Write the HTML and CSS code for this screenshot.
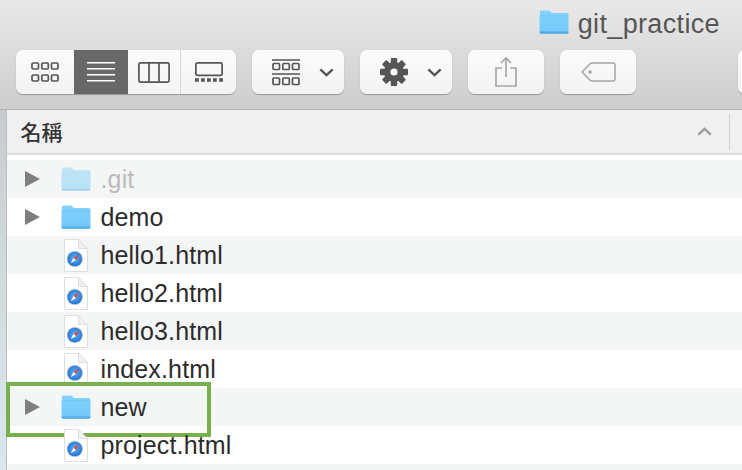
FILE: index.html
```html
<!DOCTYPE html>
<html lang="zh-Hant">
<head>
<meta charset="utf-8">
<title>git_practice</title>
<link rel="stylesheet" href="styles.css">
</head>
<body>
<svg class="defs" width="0" height="0" aria-hidden="true">
  <defs>
    <linearGradient id="fold" x1="0" y1="0" x2="0" y2="1">
      <stop offset="0" stop-color="#84d3fc"/>
      <stop offset="1" stop-color="#70c8fa"/>
    </linearGradient>
    <radialGradient id="dial" cx="0.5" cy="0.45" r="0.6">
      <stop offset="0" stop-color="#5db4f2"/>
      <stop offset="1" stop-color="#1e6ed2"/>
    </radialGradient>
    <symbol id="folder" viewBox="0 0 30 24">
      <path d="M1 5V2C1 1 1.600 .5 2.500 .5h7c.8 0 1.200.3 1.800.9L13 3h14.800C29 3 29.500 3.800 29.500 5v17c0 1-.7 1.700-1.700 1.700H2.200C1.200 23.700.5 23 .5 22V6c0-.4.1-.8.5-1z" fill="url(#fold)"/>
      <path d="M1 5.500h28.500v.7H.5c0-.3.1-.5.5-.7z" fill="#5ab8f2" opacity=".55"/>
      <path d="M.5 22c0 1 .7 1.700 1.700 1.700h25.600c1 0 1.700-.7 1.700-1.700v-.4H.5z" fill="#4aa6e4" opacity=".8"/>
    </symbol>
    <symbol id="page" viewBox="0 0 24 33">
      <path d="M.5 .5H14.500L23.500 9.500V32.500H.5z" fill="#fff" stroke="#dedede"/>
      <path d="M14.500 .5V9.500H23.500z" fill="#f0f0f0" stroke="#dedede"/>
      <circle cx="10.800" cy="20" r="8" fill="#b5c1cc"/>
      <circle cx="10.800" cy="20" r="7.300" fill="url(#dial)"/>
      <path d="M15 15.800L12 21.200 9.600 18.800z" fill="#ef3f3a"/>
      <path d="M6.600 24.200L9.600 18.800 12 21.200z" fill="#f4f6f8"/>
    </symbol>
    <symbol id="tri" viewBox="0 0 15 16">
      <path d="M0 0L15 8 0 16z" fill="#7f7f7f"/>
    </symbol>
    <symbol id="chev" viewBox="0 0 15 9">
      <path d="M1.300 1.300L7.500 7.200 13.700 1.300" fill="none" stroke="currentColor" stroke-width="2.300"/>
    </symbol>
  </defs>
</svg>
<div class="page">
  <header class="toolbar">
    <div class="titlebar">
      <svg class="title-icon" width="30" height="24"><use href="#folder"/></svg>
      <span class="title-text">git_practice</span>
    </div>
    <div class="tools">
      <div class="btn segmented">
        <span class="seg seg-a">
          <svg width="28" height="20" viewBox="0 0 28 20" fill="none" stroke="#555" stroke-width="1.700">
            <rect x="1" y="1" width="6.500" height="6" rx="1.200"/><rect x="10.800" y="1" width="6.500" height="6" rx="1.200"/><rect x="20.500" y="1" width="6.500" height="6" rx="1.200"/>
            <rect x="1" y="13" width="6.500" height="6" rx="1.200"/><rect x="10.800" y="13" width="6.500" height="6" rx="1.200"/><rect x="20.500" y="13" width="6.500" height="6" rx="1.200"/>
          </svg>
        </span>
        <span class="seg seg-b">
          <svg width="28" height="20" viewBox="0 0 28 20" stroke="#fff" stroke-width="1.400">
            <path d="M0 .7H28M0 6.700H28M0 12.700H28M0 18.700H28"/>
          </svg>
        </span>
        <span class="seg seg-c">
          <svg width="32" height="21" viewBox="0 0 32 21" fill="none" stroke="#555" stroke-width="1.700">
            <rect x=".9" y=".9" width="30.200" height="19.200" rx="1.500"/><path d="M11 1V20M21 1V20"/>
          </svg>
        </span>
        <span class="seg seg-d">
          <svg width="28" height="20" viewBox="0 0 28 20" fill="none" stroke="#555" stroke-width="1.700">
            <rect x=".9" y=".9" width="26.200" height="12.500" rx="1.500"/>
            <path d="M0 18H3.800M6 18H9.800M12 18H15.800M18 18H21.800M24.200 18H28" stroke-width="3.500"/>
          </svg>
        </span>
      </div>
      <div class="btn menu">
        <svg class="group-icon" width="28" height="27" viewBox="0 0 28 27" fill="none" stroke="#555" stroke-width="1.700">
          <path d="M0 1H28M0 15H28"/>
          <rect x="1" y="4.500" width="6.500" height="6" rx="1"/><rect x="10.800" y="4.500" width="6.500" height="6" rx="1"/><rect x="20.500" y="4.500" width="6.500" height="6" rx="1"/>
          <rect x="1" y="19" width="6.500" height="6.500" rx="1"/><rect x="10.800" y="19" width="6.500" height="6.500" rx="1"/><rect x="20.500" y="19" width="6.500" height="6.500" rx="1"/>
        </svg>
        <svg class="chev" width="15" height="9"><use href="#chev"/></svg>
      </div>
      <div class="btn menu">
        <svg width="28" height="28" viewBox="0 0 28 28">
          <g fill="#555">
            <rect x="10.800" y="0" width="6.400" height="28" rx="1"/>
            <rect x="10.800" y="0" width="6.400" height="28" rx="1" transform="rotate(45 14 14)"/>
            <rect x="10.800" y="0" width="6.400" height="28" rx="1" transform="rotate(90 14 14)"/>
            <rect x="10.800" y="0" width="6.400" height="28" rx="1" transform="rotate(135 14 14)"/>
            <circle cx="14" cy="14" r="10"/>
          </g>
          <circle cx="14" cy="14" r="3.600" fill="#f8f8f8"/>
        </svg>
        <svg class="chev" width="15" height="9"><use href="#chev"/></svg>
      </div>
      <div class="btn single">
        <svg width="22" height="30" viewBox="0 0 22 30" fill="none" stroke="#a6a6a6" stroke-width="1.700">
          <path d="M7 11H1V29H21V11H15M11 20V1.500M6 6L11 1 16 6"/>
        </svg>
      </div>
      <div class="btn single">
        <svg width="35" height="20" viewBox="0 0 35 20" fill="none" stroke="#a6a6a6" stroke-width="1.500">
          <path d="M10 1H32C33.200 1 34 1.800 34 3V17C34 18.200 33.200 19 32 19H10L1 10z"/>
          <circle cx="9" cy="10" r="1.800" fill="#a6a6a6" stroke="none"/>
        </svg>
      </div>
      <div class="btn stub"></div>
    </div>
  </header>
  <div class="content">
    <div class="strip"></div>
    <section class="list">
      <div class="colhead">
        <span class="colname">名稱</span>
        <svg class="caret" width="15" height="9"><use href="#chev"/></svg>
        <span class="coldiv"></span>
      </div>
      <div class="gap"></div>
      <div class="row odd dim">
        <svg class="tri" width="15" height="16"><use href="#tri"/></svg>
        <svg class="folder ghost" width="30" height="24"><use href="#folder"/></svg>
        <span class="name">.git</span>
      </div>
      <div class="row">
        <svg class="tri" width="15" height="16"><use href="#tri"/></svg>
        <svg class="folder" width="30" height="24"><use href="#folder"/></svg>
        <span class="name">demo</span>
      </div>
      <div class="row odd">
        <svg class="file" width="24" height="33"><use href="#page"/></svg>
        <span class="name">hello1.html</span>
      </div>
      <div class="row">
        <svg class="file" width="24" height="33"><use href="#page"/></svg>
        <span class="name">hello2.html</span>
      </div>
      <div class="row odd">
        <svg class="file" width="24" height="33"><use href="#page"/></svg>
        <span class="name">hello3.html</span>
      </div>
      <div class="row">
        <svg class="file" width="24" height="33"><use href="#page"/></svg>
        <span class="name">index.html</span>
      </div>
      <div class="row odd marked">
        <svg class="tri" width="15" height="16"><use href="#tri"/></svg>
        <svg class="folder" width="30" height="24"><use href="#folder"/></svg>
        <span class="name">new</span>
        <span class="highlight"></span>
      </div>
      <div class="row">
        <svg class="file" width="24" height="33"><use href="#page"/></svg>
        <span class="name">project.html</span>
      </div>
      <div class="row odd"></div>
    </section>
  </div>
</div>
</body>
</html>
```
FILE: styles.css
```css
* { box-sizing: border-box; }
html, body { margin: 0; padding: 0; }
body {
  width: 742px;
  height: 470px;
  overflow: hidden;
  background: #fff;
  font-family: "Liberation Sans", "Noto Sans CJK TC", sans-serif;
}
.defs { display: block; width: 0; height: 0; }
.page { display: flex; flex-direction: column; height: 470px; overflow: hidden; }

.toolbar {
  height: 110px;
  flex: none;
  background: linear-gradient(#e9e9e9, #cdcdcd);
  border-bottom: 1px solid #b2b2b2;
  overflow: hidden;
}
.titlebar {
  height: 50px;
  display: flex;
  justify-content: flex-end;
  align-items: flex-start;
  padding: 10px 22px 0 0;
  gap: 9px;
}
.title-text { font-size: 27px; letter-spacing: .35px; line-height: 28px; color: #565656; }
.tools { display: flex; gap: 16px; padding-left: 16px; height: 44px; width: 760px; }
.btn {
  height: 44px;
  background: linear-gradient(#fbfbfb, #f3f3f3);
  border-radius: 7px;
  box-shadow: 0 1px 1px rgba(0,0,0,.28);
  display: flex;
  align-items: center;
  justify-content: center;
  flex: none;
}
.segmented { width: 220px; align-items: stretch; overflow: hidden; }
.seg { display: flex; align-items: center; justify-content: center; }
.seg-a { width: 58px; }
.seg-b { width: 54px; background: #686868; }
.seg-c { width: 53px; border-right: 1px solid #d8d8d8; }
.seg-d { width: 55px; }
.menu { width: 92px; gap: 19px; color: #555; justify-content: flex-start; padding-left: 20px; }
.single { width: 76px; }
.stub { width: 40px; margin-left: 86px; }
.chev { flex: none; }

.content { flex: 1; display: flex; min-height: 0; }
.strip {
  width: 7px;
  flex: none;
  background: linear-gradient(#c8cbce, #d3dde0 55%, #d9e8ee);
  border-right: 1px solid #bdbdbd;
}
.list { flex: 1; display: flex; flex-direction: column; min-width: 0; }
.colhead {
  height: 45px;
  flex: none;
  background: #f0f0f0;
  border-bottom: 2px solid #dcdcdc;
  display: flex;
  align-items: center;
  padding-left: 13.500px;
}
.colname { font-size: 21px; font-weight: 500; color: #333; font-family: "Noto Sans CJK TC", sans-serif; padding-bottom: 2px; }
.caret { margin-left: auto; transform: rotate(180deg); color: #9a9a9a; }
.coldiv { width: 1px; height: 36px; background: #d2d2d2; margin: 0 12px 0 17px; }
.gap { height: 5px; flex: none; }
.row {
  height: 38px;
  flex: none;
  display: flex;
  align-items: center;
  position: relative;
  padding-left: 18px;
}
.odd { background: #f4f5f5; }
.tri { margin-right: 21px; flex: none; }
.folder { flex: none; margin-right: 9.500px; }
.file { flex: none; margin: 0 12.500px 0 39px; }
.ghost { opacity: .45; }
.name { font-size: 25px; letter-spacing: .15px; color: #2c2c2c; line-height: 38px; }
.dim .name { color: #bcbcbc; }
.highlight {
  position: absolute;
  left: -1px;
  top: -6px;
  width: 205px;
  height: 55px;
  border: 4px solid #76b14b;
}
```
